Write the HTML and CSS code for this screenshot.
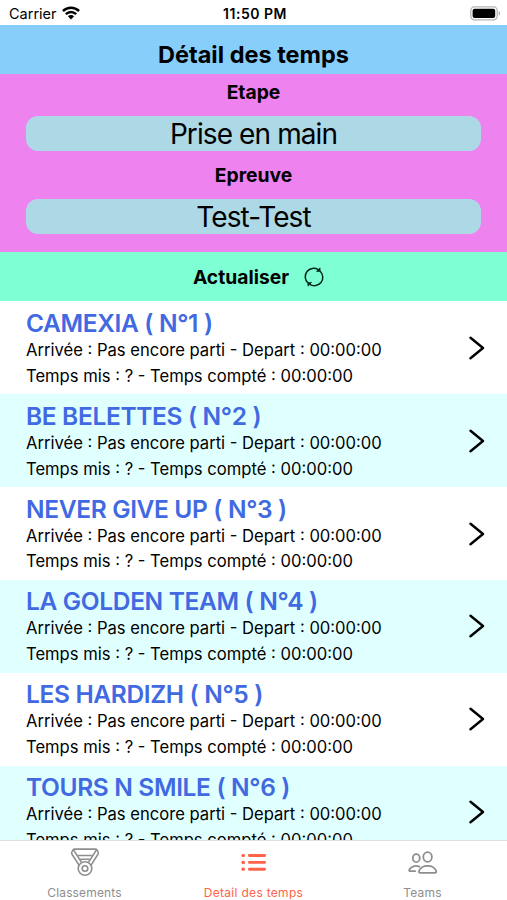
FILE: index.html
```html
<!DOCTYPE html>
<html lang="fr">
<head>
  <meta charset="UTF-8">
  <meta name="viewport" content="width=device-width, initial-scale=1.0">
  <title>Détail des temps</title>
  <link rel="stylesheet" href="styles.css">
</head>
<body>
  <div class="status-bar">
    <div class="status-left">
      <span class="carrier">Carrier</span>
      <svg class="wifi" viewBox="0 0 18 14" width="18" height="14">
        <path d="M.9 5C5.5 .7 12.5 .7 17.1 5M3.8 8.1c3-2.9 7.4-2.9 10.4 0" fill="none" stroke="#000" stroke-width="2.4"/>
        <path d="M5.9 10.3c1.8-1.6 4.4-1.6 6.2 0L9 13.5z"/>
      </svg>
    </div>
    <span class="clock">11:50 PM</span>
    <div class="status-right">
      <svg viewBox="0 0 31 15" width="31" height="15">
        <rect x=".8" y=".8" width="26.4" height="13" rx="3.8" fill="#fff" stroke="#b5b5b5" stroke-width="1.3"/>
        <rect x="2.6" y="2.7" width="22.6" height="9.4" rx="2"/>
        <path d="M28.7 5v4.8c2-.9 2-3.9 0-4.8z" fill="#b5b5b5"/>
      </svg>
    </div>
  </div>

  <h1 class="title">Détail des temps</h1>

  <div class="filters">
    <div class="filter-label">Etape</div>
    <div class="filter-value">Prise en main</div>
    <div class="filter-label">Epreuve</div>
    <div class="filter-value">Test-Test</div>
  </div>

  <div class="refresh">
    <span>Actualiser</span>
    <svg viewBox="0 0 20 20" width="20" height="20" fill="none" stroke="#00261b" stroke-width="1.5">
      <path d="M3.8 15.8A8.4 8.4 0 0 1 14.2 2.7M16.2 4.2A8.4 8.4 0 0 1 5.8 17.3"/>
      <path d="M12.4 4.6 16.3 4.5 16 .8zM7.6 15.4 3.7 15.5 4 19.2z" fill="#00261b" stroke-width=".6"/>
    </svg>
  </div>

  <div class="list">
    <div class="row">
      <div class="infos">
        <div class="team">CAMEXIA ( N°1 )</div>
        <div class="line">Arrivée : Pas encore parti - Depart : 00:00:00</div>
        <div class="line">Temps mis : ? - Temps compté : 00:00:00</div>
      </div>
      <svg class="chevron" viewBox="0 0 16 24" width="16" height="24"><path d="M1.5 1.8 14 12 1.5 22.2"/></svg>
    </div>
    <div class="row">
      <div class="infos">
        <div class="team">BE BELETTES ( N°2 )</div>
        <div class="line">Arrivée : Pas encore parti - Depart : 00:00:00</div>
        <div class="line">Temps mis : ? - Temps compté : 00:00:00</div>
      </div>
      <svg class="chevron" viewBox="0 0 16 24" width="16" height="24"><path d="M1.5 1.8 14 12 1.5 22.2"/></svg>
    </div>
    <div class="row">
      <div class="infos">
        <div class="team">NEVER GIVE UP ( N°3 )</div>
        <div class="line">Arrivée : Pas encore parti - Depart : 00:00:00</div>
        <div class="line">Temps mis : ? - Temps compté : 00:00:00</div>
      </div>
      <svg class="chevron" viewBox="0 0 16 24" width="16" height="24"><path d="M1.5 1.8 14 12 1.5 22.2"/></svg>
    </div>
    <div class="row">
      <div class="infos">
        <div class="team">LA GOLDEN TEAM ( N°4 )</div>
        <div class="line">Arrivée : Pas encore parti - Depart : 00:00:00</div>
        <div class="line">Temps mis : ? - Temps compté : 00:00:00</div>
      </div>
      <svg class="chevron" viewBox="0 0 16 24" width="16" height="24"><path d="M1.5 1.8 14 12 1.5 22.2"/></svg>
    </div>
    <div class="row">
      <div class="infos">
        <div class="team">LES HARDIZH ( N°5 )</div>
        <div class="line">Arrivée : Pas encore parti - Depart : 00:00:00</div>
        <div class="line">Temps mis : ? - Temps compté : 00:00:00</div>
      </div>
      <svg class="chevron" viewBox="0 0 16 24" width="16" height="24"><path d="M1.5 1.8 14 12 1.5 22.2"/></svg>
    </div>
    <div class="row">
      <div class="infos">
        <div class="team">TOURS N SMILE ( N°6 )</div>
        <div class="line">Arrivée : Pas encore parti - Depart : 00:00:00</div>
        <div class="line">Temps mis : ? - Temps compté : 00:00:00</div>
      </div>
      <svg class="chevron" viewBox="0 0 16 24" width="16" height="24"><path d="M1.5 1.8 14 12 1.5 22.2"/></svg>
    </div>
  </div>

  <div class="tabs">
    <div class="tab">
      <svg viewBox="0 0 30 30" width="30" height="30" fill="none" stroke="currentColor" stroke-width="1.6" stroke-linejoin="round">
        <path d="M9.3 18.6 2 7.2Q1.2 5.8 2 4.6L3 3Q3.5 2.1 4.6 2.1H25.4Q26.5 2.1 27 3L28 4.6Q28.8 5.8 28 7.2L20.7 18.6"/>
        <path d="M3.4 2.6 11.3 15.2M26.6 2.6 18.7 15.2M7 8.5H23M10.6 14V12.2h8.8V14"/>
        <circle cx="15" cy="21.5" r="6.8"/>
        <circle cx="15" cy="21.5" r="2.8"/>
      </svg>
      <span>Classements</span>
    </div>
    <div class="tab active">
      <svg viewBox="0 0 30 30" width="30" height="30" fill="none" stroke="currentColor" stroke-width="2.9" stroke-linecap="round">
        <path d="M10.4 8.5H25.6M10.4 15.4H25.6M10.4 22.2H25.6"/>
        <path d="M3.9 8.5h.6M3.9 15.4h.6M3.9 22.2h.6" stroke-width="3.2"/>
      </svg>
      <span>Detail des temps</span>
    </div>
    <div class="tab">
      <svg viewBox="0 0 30 30" width="30" height="30" fill="none" stroke="currentColor" stroke-width="1.8" stroke-linecap="round" stroke-linejoin="round">
        <ellipse cx="19.6" cy="10" rx="4.3" ry="4.8"/>
        <ellipse cx="8.3" cy="11.2" rx="3.5" ry="4"/>
        <path d="M12.3 25.8C11 25.8 10.7 24.9 11.1 23.8 12.4 20.4 15.8 18.8 19.6 18.8s7.2 1.6 8.5 5c.4 1.1.1 2-1.2 2z"/>
        <path d="M11.3 19.700C7.600 18.100 3 19.200 1.400 22.500c-.4 1-.1 1.700 1 1.700H7.100"/>
      </svg>
      <span>Teams</span>
    </div>
  </div>
</body>
</html>
```
FILE: styles.css
```css
* {
  box-sizing: border-box;
}

body {
  margin: 0;
  height: 900px;
  display: flex;
  flex-direction: column;
  overflow: hidden;
  background: #fff;
  color: #000;
  font-family: Inter, "Liberation Sans", sans-serif;
}

svg {
  display: block;
  flex: none;
}

/* Status bar */
.status-bar {
  height: 25.3px;
  flex: none;
  display: grid;
  grid-template-columns: 1fr auto 1fr;
  align-items: center;
  padding: 1px 6px 0 9px;
  font-size: 14.5px;
}

.status-left {
  display: flex;
  align-items: center;
  gap: 5px;
}

.clock {
  font-size: 14px;
  font-weight: 600;
  letter-spacing: 0.5px;
}

.status-right {
  display: flex;
  justify-content: flex-end;
}

/* Header */
.title {
  margin: 0;
  height: 48.7px;
  flex: none;
  padding-top: 11px;
  background: lightskyblue;
  text-align: center;
  font-size: 23.5px;
  font-weight: 650;
  line-height: 38px;
}

.filters {
  height: 178.5px;
  flex: none;
  padding: 0 26px;
  background: violet;
  text-align: center;
}

.filter-label {
  height: 42.5px;
  font-size: 19.3px;
  font-weight: 650;
  line-height: 37px;
}

.filter-value {
  height: 35px;
  margin-bottom: 5.5px;
  border-radius: 12px;
  background: lightblue;
  font-size: 28px;
  letter-spacing: -0.9px;
  line-height: 37px;
}

.refresh {
  height: 49px;
  flex: none;
  display: flex;
  align-items: center;
  justify-content: center;
  gap: 15px;
  padding-left: 10px;
  background: aquamarine;
  font-size: 19.3px;
  font-weight: 650;
}

/* List */
.list {
  flex: 1;
  min-height: 0;
  overflow: hidden;
}

.row {
  height: 92.85px;
  display: flex;
  align-items: center;
  justify-content: space-between;
  padding: 0 22px 0 26px;
}

.row:nth-child(even) {
  background: lightcyan;
}

.infos {
  padding-top: 1.5px;
}

.team {
  color: royalblue;
  font-size: 24.5px;
  font-weight: 600;
  letter-spacing: -0.35px;
  line-height: 30px;
}

.line {
  font-size: 16.6px;
  line-height: 25.7px;
  white-space: nowrap;
}

.chevron path {
  fill: none;
  stroke: #000;
  stroke-width: 2.4;
  stroke-linecap: round;
  stroke-linejoin: round;
}

/* Tabs */
.tabs {
  height: 60px;
  flex: none;
  display: flex;
  border-top: 1px solid #e0e0e0;
  background: #fff;
}

.tab {
  flex: 1;
  display: flex;
  flex-direction: column;
  align-items: center;
  padding-top: 6px;
  color: #8e8e8f;
  font-size: 12px;
  letter-spacing: 0.15px;
}

.tab span {
  line-height: 31px;
}

.tab.active {
  color: tomato;
  letter-spacing: 0.3px;
}
```
